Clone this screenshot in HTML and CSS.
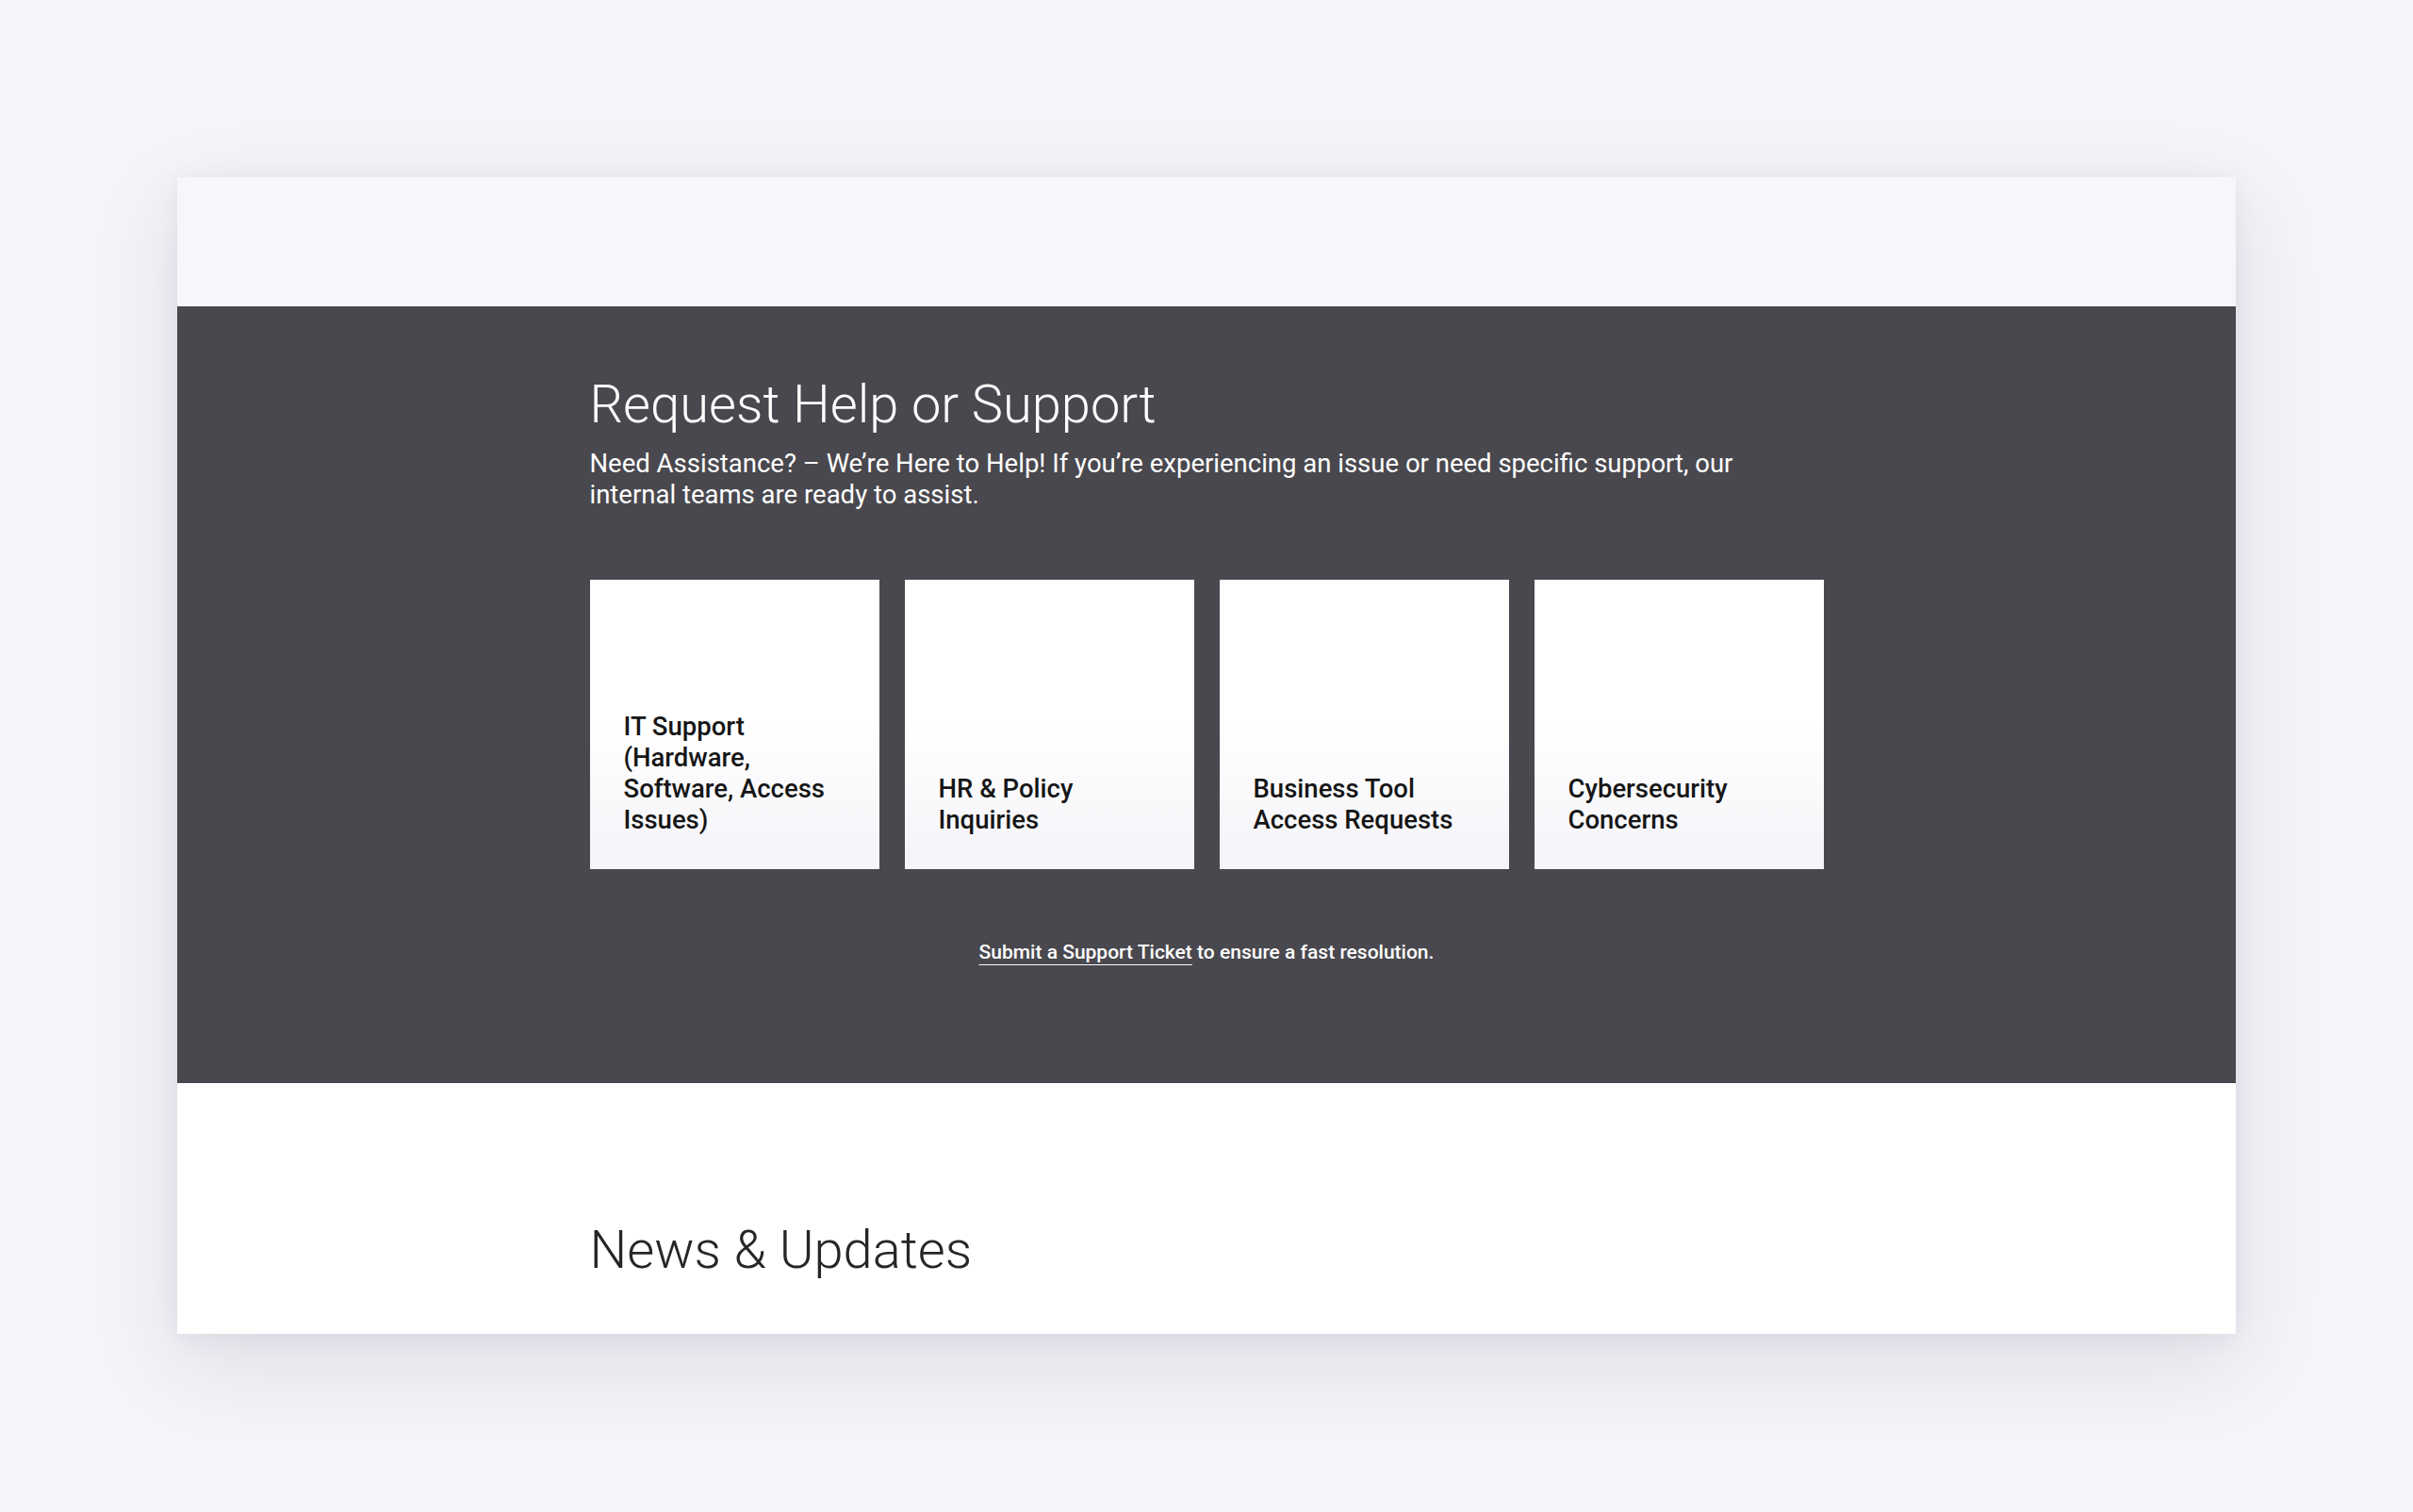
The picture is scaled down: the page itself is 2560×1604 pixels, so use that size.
FILE: index.html
```html
<!DOCTYPE html>
<html lang="en">
<head>
    <meta charset="UTF-8">
    <meta name="viewport" content="width=device-width, initial-scale=1.0">
    <title>Request Help or Support</title>
    <link rel="stylesheet" href="styles.css">
</head>
<body>
    <div class="frame">
        <div class="topbar"></div>
        <section class="support">
            <div class="inner">
                <h2 class="title">Request Help or Support</h2>
                <p class="lead">Need Assistance? – We’re Here to Help! If you’re experiencing an issue or need specific support, our internal teams are ready to assist.</p>
                <div class="cards">
                    <a class="card" href="#"><span>IT Support (Hardware, Software, Access Issues)</span></a>
                    <a class="card" href="#"><span>HR &amp; Policy Inquiries</span></a>
                    <a class="card" href="#"><span>Business Tool Access Requests</span></a>
                    <a class="card" href="#"><span>Cybersecurity Concerns</span></a>
                </div>
                <p class="ticket"><a href="#">Submit a Support Ticket</a> to ensure a fast resolution.</p>
            </div>
        </section>
        <section class="news">
            <div class="inner">
                <h2 class="news-title">News &amp; Updates</h2>
            </div>
        </section>
    </div>
</body>
</html>
```

FILE: styles.css
```css
body {
    font-family: Roboto, "Noto Sans", Arial, sans-serif;
    background-color: #f4f5f9;
    margin: 0;
    padding: 188px;
}

.frame {
    width: 2184px;
    height: 1227px;
    overflow: hidden;
    background-color: #ffffff;
    box-shadow: 0 30px 90px rgba(40, 40, 70, 0.11), 0 4px 24px rgba(40, 40, 70, 0.06);
}

.topbar {
    height: 137px;
    background-color: #f6f7fb;
}

.inner {
    width: 1309px;
    margin: 0 auto;
}

.support {
    background-color: #49484e;
    color: #ffffff;
    padding: 71px 0 127px;
}

.title {
    margin: 0;
    font-size: 56px;
    font-weight: 300;
    line-height: 1.2;
}

.lead {
    margin: 12px 0 0;
    font-size: 27.5px;
    line-height: 33px;
    font-weight: 400;
}

.cards {
    display: grid;
    grid-template-columns: repeat(4, 307px);
    gap: 27px;
    margin-top: 74px;
}

.card {
    height: 307px;
    box-sizing: border-box;
    padding: 36px;
    display: flex;
    align-items: flex-end;
    background: linear-gradient(180deg, #ffffff 50%, #f4f4f9 100%);
    color: #161616;
    text-decoration: none;
    font-size: 27.5px;
    font-weight: 500;
    line-height: 33px;
}

.ticket {
    margin: 76px 0 0;
    text-align: center;
    font-size: 21px;
    font-weight: 500;
}

.ticket a {
    color: #ffffff;
    text-decoration: underline;
    text-underline-offset: 6px;
    text-decoration-thickness: 1px;
}

.news {
    padding-top: 144px;
}

.news-title {
    margin: 0;
    font-size: 56px;
    font-weight: 300;
    line-height: 1.2;
    color: #262626;
}
```
